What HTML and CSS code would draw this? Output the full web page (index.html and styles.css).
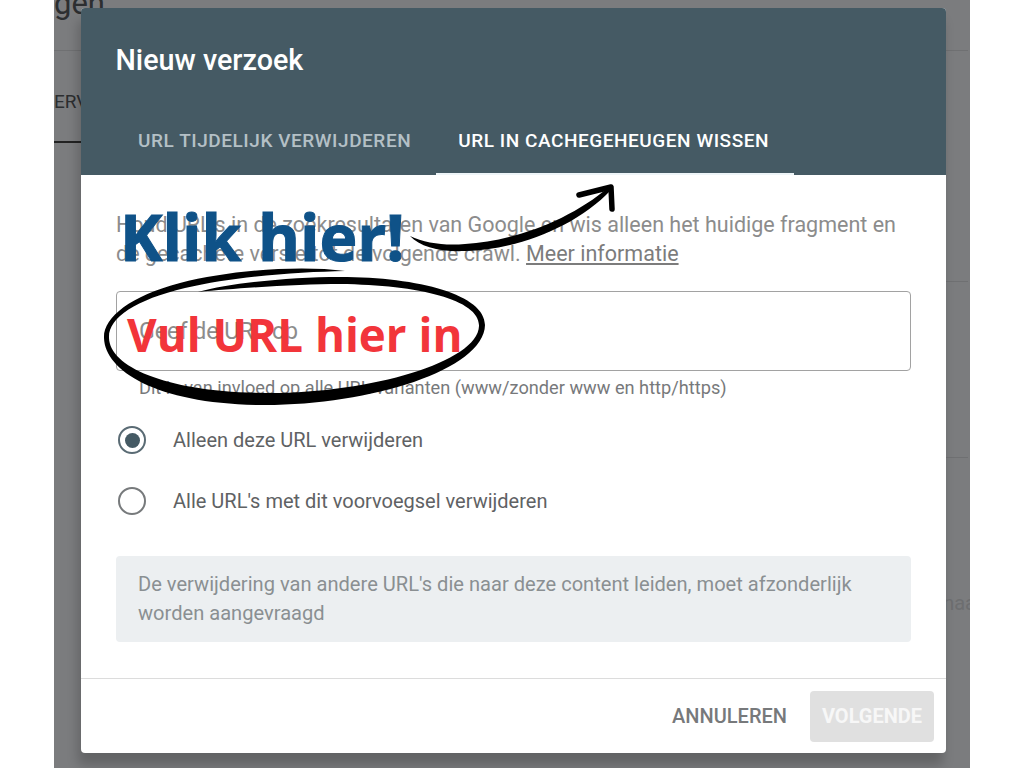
FILE: index.html
```html
<!DOCTYPE html>
<html lang="nl">

<head>
  <meta name="viewport" content="width=device-width, initial-scale=1">
  <meta charset="UTF-8">
  <title>Nieuw verzoek</title>
  <link rel="stylesheet" href="styles.css">
</head>

<body>
  <div class="screen">
    <!-- page behind the dialog -->
    <div class="bg-title">gen</div>
    <div class="bg-tab">ERV</div>
    <div class="bg-tab-line"></div>
    <div class="bg-line bg-line-1"></div>
    <div class="bg-line bg-line-2"></div>
    <div class="bg-line bg-line-3"></div>
    <div class="bg-text">naa</div>

    <div class="dialog">
      <div class="dialog-head">
        <h1 class="dialog-title">Nieuw verzoek</h1>
        <div class="tabs">
          <div class="tab">URL TIJDELIJK VERWIJDEREN</div>
          <div class="tab tab-active">URL IN CACHEGEHEUGEN WISSEN</div>
        </div>
      </div>

      <div class="dialog-body">
        <p class="intro">Houd URL's in de zoekresultaten van Google en wis alleen het huidige fragment en de gecachete versie tot de volgende crawl. <a class="more" href="#">Meer informatie</a></p>

        <div class="url-input">Geef de URL op</div>
        <div class="url-help">Dit is van invloed op alle URL-varianten (www/zonder www en http/https)</div>

        <div class="radio-row">
          <span class="radio radio-on"></span>
          <span class="radio-label">Alleen deze URL verwijderen</span>
        </div>
        <div class="radio-row">
          <span class="radio"></span>
          <span class="radio-label">Alle URL's met dit voorvoegsel verwijderen</span>
        </div>

        <div class="note">De verwijdering van andere URL's die naar deze content leiden, moet afzonderlijk worden aangevraagd</div>
      </div>

      <div class="dialog-foot">
        <span class="btn-cancel">ANNULEREN</span>
        <span class="btn-next">VOLGENDE</span>
      </div>
    </div>
  </div>

  <!-- hand drawn marks on top of the screenshot -->
  <div class="mark-click">Klik hier!</div>
  <div class="mark-url">Vul URL hier in</div>
  <svg class="marks" width="1024" height="768" viewBox="0 0 1024 768">
    <path class="ink" d="M345 271 C300 265 230 270 180 283 C130 296 103 318 104 338 C105 372 160 405 265 405 C370 405 484 370 485 325 C485 295 420 277 340 277 C290 277 230 283 198 292 C240 288 300 284 340 284 C420 285 480 300 479 326 C478 362 370 393 270 393 C170 393 110 368 109 338 C108 318 135 300 185 288 C235 276 300 272 345 271 Z" />
    <path class="ink" d="M410 236 C425 243 445 246 465 244 C515 241 570 220 609 187 L611 190 C575 228 515 250 465 251 C440 252 420 247 410 236 Z" />
    <path class="arrow-head" d="M579 195 L611 187 L612 209" />
  </svg>
</body>

</html>
```

FILE: styles.css
```css
body {
  margin: 0;
  width: 1024px;
  height: 768px;
  position: relative;
  overflow: hidden;
  background-color: #ffffff;
  font-family: Roboto, "Liberation Sans", sans-serif;
}

.screen {
  position: relative;
  width: 916px;
  height: 768px;
  margin-left: 54px;
  padding: 8px 24px 0 27px;
  box-sizing: border-box;
  overflow: hidden;
  background-color: #7b7c7e;
}

.bg-title {
  position: absolute;
  left: 0;
  top: -15px;
  font-size: 31px;
  line-height: 38px;
  color: #2c2e30;
}

.bg-tab {
  position: absolute;
  left: 0;
  top: 90px;
  font-size: 19px;
  line-height: 24px;
  color: #2c2e30;
}

.bg-tab-line {
  position: absolute;
  left: 0;
  top: 141px;
  width: 27px;
  height: 2px;
  background-color: #222222;
}

.bg-line {
  position: absolute;
  height: 1px;
  background-color: #6f7072;
}

.bg-line-1 {
  left: 0;
  width: 914px;
  top: 50px;
}

.bg-line-2 {
  left: 880px;
  width: 34px;
  top: 281px;
}

.bg-line-3 {
  left: 880px;
  width: 34px;
  top: 457px;
}

.bg-text {
  position: absolute;
  right: -6px;
  top: 591px;
  font-size: 20px;
  line-height: 24px;
  color: #6d6e70;
}

.dialog {
  position: relative;
  display: flex;
  flex-direction: column;
  width: 865px;
  height: 745px;
  border-radius: 4px;
  background-color: #ffffff;
  box-shadow: -3px 12px 12px rgba(0, 0, 0, 0.2);
  overflow: hidden;
}

.dialog-head {
  height: 167px;
  background-color: #455a64;
  display: flex;
  flex-direction: column;
  justify-content: space-between;
}

.dialog-title {
  margin: 0;
  padding: 33px 35px 0 34.5px;
  font-size: 28.7px;
  line-height: 38px;
  font-weight: 500;
  color: #ffffff;
}

.tabs {
  display: flex;
  padding-left: 35px;
}

.tab {
  height: 68px;
  padding: 0 25px 0 22px;
  box-sizing: border-box;
  font-size: 19px;
  line-height: 68px;
  font-weight: 500;
  letter-spacing: 0.55px;
  white-space: nowrap;
  color: #b4c0c6;
}

.tab-active {
  color: #ffffff;
  border-bottom: 2px solid #eef5f8;
}

.dialog-body {
  padding: 35px 35px 0;
  flex: 1;
}

.intro {
  margin: 0;
  font-size: 21.5px;
  line-height: 29px;
  color: #8c8c8c;
}

.more {
  color: #7c7c7c;
}

.url-input {
  height: 80px;
  margin-top: 23px;
  padding-left: 22px;
  border: 1px solid #a2a2a2;
  border-radius: 4px;
  box-sizing: border-box;
  font-size: 23.2px;
  line-height: 78px;
  color: #8c8c8c;
}

.url-help {
  padding: 6px 0 0 23px;
  font-size: 18.2px;
  line-height: 22px;
  color: #77797b;
}

.radio-row {
  display: flex;
  align-items: center;
  gap: 27px;
  height: 28px;
  padding-left: 2px;
  margin-top: 27px;
}

.radio {
  width: 28px;
  height: 28px;
  border: 2px solid #777a7c;
  border-radius: 50%;
  box-sizing: border-box;
  flex: none;
  display: flex;
  align-items: center;
  justify-content: center;
}

.radio-on {
  border-color: #5a6b74;
}

.radio-on::after {
  content: "";
  width: 15px;
  height: 15px;
  border-radius: 50%;
  background-color: #455a64;
}

.radio-label {
  font-size: 20px;
  color: #5f6264;
}

.radio-row + .radio-row {
  margin-top: 33px;
}

.note {
  margin-top: 41px;
  padding: 14px 22px;
  height: 86px;
  box-sizing: border-box;
  border-radius: 4px;
  background-color: #eceff1;
  font-size: 20.1px;
  line-height: 29px;
  color: #8a8f92;
}

.dialog-foot {
  height: 75px;
  border-top: 1px solid #dcdcdc;
  box-sizing: border-box;
  display: flex;
  align-items: center;
  justify-content: flex-end;
  padding: 0 12px 0 0;
}

.btn-cancel {
  font-size: 20px;
  font-weight: 500;
  color: #77797b;
  margin-right: 23px;
}

.btn-next {
  width: 124px;
  height: 51px;
  border-radius: 4px;
  background-color: #e0e0e0;
  font-size: 20px;
  font-weight: 700;
  line-height: 51px;
  text-align: center;
  color: #f7f7f7;
}

.mark-click {
  position: absolute;
  left: 120px;
  top: 197px;
  font-family: "Open Sans", sans-serif;
  font-size: 64px;
  line-height: 80px;
  font-weight: 700;
  -webkit-text-stroke: 1px #0f5288;
  color: #0f5288;
  white-space: nowrap;
}

.mark-url {
  position: absolute;
  left: 127px;
  top: 306px;
  font-family: "Open Sans", sans-serif;
  font-size: 45.7px;
  line-height: 56px;
  font-weight: 700;
  color: #f2353a;
  white-space: nowrap;
}

.marks {
  position: absolute;
  left: 0;
  top: 0;
  pointer-events: none;
}

.ink {
  fill: #000000;
}

.arrow-head {
  fill: none;
  stroke: #000000;
  stroke-width: 5.5;
  stroke-linecap: round;
  stroke-linejoin: round;
}
```
